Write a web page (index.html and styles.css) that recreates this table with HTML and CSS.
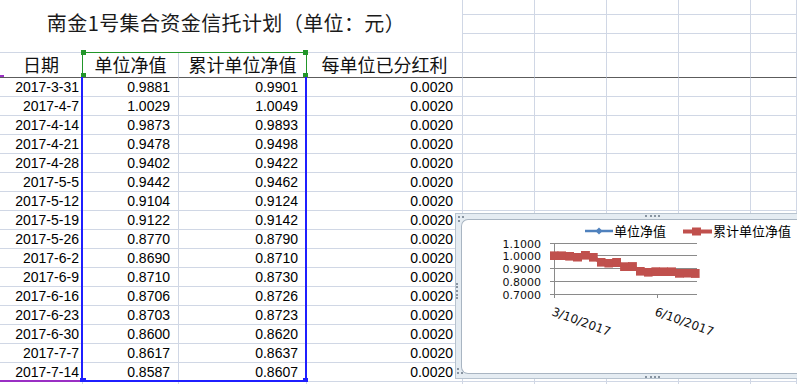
FILE: index.html
```html
<!DOCTYPE html>
<html lang="zh-CN">
<head>
<meta charset="utf-8">
<title>南金1号集合资金信托计划</title>
<link rel="stylesheet" href="styles.css">
</head>
<body>
<div class="sheet">
  <div class="grid">
    <div class="c title">南金1号集合资金信托计划（单位：元）</div>
    <div class="c"></div><div class="c"></div><div class="c"></div><div class="c"></div><div class="c"></div>
    <div class="c"></div><div class="c"></div><div class="c"></div><div class="c"></div><div class="c"></div>
    <div class="c"></div><div class="c"></div><div class="c"></div><div class="c"></div><div class="c"></div>

    <div class="c h">日期</div><div class="c h">单位净值</div><div class="c h">累计单位净值</div><div class="c h">每单位已分红利</div>
    <div class="c h"></div><div class="c h"></div><div class="c h"></div><div class="c h"></div><div class="c h"></div>

    <div class="c d">2017-3-31</div><div class="c n">0.9881</div><div class="c n">0.9901</div><div class="c n nd">0.0020</div>
    <div class="c"></div><div class="c"></div><div class="c"></div><div class="c"></div><div class="c"></div>
    <div class="c d">2017-4-7</div><div class="c n">1.0029</div><div class="c n">1.0049</div><div class="c n nd">0.0020</div>
    <div class="c"></div><div class="c"></div><div class="c"></div><div class="c"></div><div class="c"></div>
    <div class="c d">2017-4-14</div><div class="c n">0.9873</div><div class="c n">0.9893</div><div class="c n nd">0.0020</div>
    <div class="c"></div><div class="c"></div><div class="c"></div><div class="c"></div><div class="c"></div>
    <div class="c d">2017-4-21</div><div class="c n">0.9478</div><div class="c n">0.9498</div><div class="c n nd">0.0020</div>
    <div class="c"></div><div class="c"></div><div class="c"></div><div class="c"></div><div class="c"></div>
    <div class="c d">2017-4-28</div><div class="c n">0.9402</div><div class="c n">0.9422</div><div class="c n nd">0.0020</div>
    <div class="c"></div><div class="c"></div><div class="c"></div><div class="c"></div><div class="c"></div>
    <div class="c d">2017-5-5</div><div class="c n">0.9442</div><div class="c n">0.9462</div><div class="c n nd">0.0020</div>
    <div class="c"></div><div class="c"></div><div class="c"></div><div class="c"></div><div class="c"></div>
    <div class="c d">2017-5-12</div><div class="c n">0.9104</div><div class="c n">0.9124</div><div class="c n nd">0.0020</div>
    <div class="c"></div><div class="c"></div><div class="c"></div><div class="c"></div><div class="c"></div>
    <div class="c d">2017-5-19</div><div class="c n">0.9122</div><div class="c n">0.9142</div><div class="c n nd">0.0020</div>
    <div class="c"></div><div class="c"></div><div class="c"></div><div class="c"></div><div class="c"></div>
    <div class="c d">2017-5-26</div><div class="c n">0.8770</div><div class="c n">0.8790</div><div class="c n nd">0.0020</div>
    <div class="c"></div><div class="c"></div><div class="c"></div><div class="c"></div><div class="c"></div>
    <div class="c d">2017-6-2</div><div class="c n">0.8690</div><div class="c n">0.8710</div><div class="c n nd">0.0020</div>
    <div class="c"></div><div class="c"></div><div class="c"></div><div class="c"></div><div class="c"></div>
    <div class="c d">2017-6-9</div><div class="c n">0.8710</div><div class="c n">0.8730</div><div class="c n nd">0.0020</div>
    <div class="c"></div><div class="c"></div><div class="c"></div><div class="c"></div><div class="c"></div>
    <div class="c d">2017-6-16</div><div class="c n">0.8706</div><div class="c n">0.8726</div><div class="c n nd">0.0020</div>
    <div class="c"></div><div class="c"></div><div class="c"></div><div class="c"></div><div class="c"></div>
    <div class="c d">2017-6-23</div><div class="c n">0.8703</div><div class="c n">0.8723</div><div class="c n nd">0.0020</div>
    <div class="c"></div><div class="c"></div><div class="c"></div><div class="c"></div><div class="c"></div>
    <div class="c d">2017-6-30</div><div class="c n">0.8600</div><div class="c n">0.8620</div><div class="c n nd">0.0020</div>
    <div class="c"></div><div class="c"></div><div class="c"></div><div class="c"></div><div class="c"></div>
    <div class="c d">2017-7-7</div><div class="c n">0.8617</div><div class="c n">0.8637</div><div class="c n nd">0.0020</div>
    <div class="c"></div><div class="c"></div><div class="c"></div><div class="c"></div><div class="c"></div>
    <div class="c d">2017-7-14</div><div class="c n">0.8587</div><div class="c n">0.8607</div><div class="c n nd">0.0020</div>
    <div class="c"></div><div class="c"></div><div class="c"></div><div class="c"></div><div class="c"></div>

    <div class="c"></div><div class="c"></div><div class="c"></div><div class="c"></div><div class="c"></div>
    <div class="c"></div><div class="c"></div><div class="c"></div><div class="c"></div>
  </div>

  <!-- selection overlays -->
  <div class="sel-head"></div>
  <div class="sel-range"></div>
  <div class="sel-purple"></div>
  <div class="sel-purple-top"></div>
  <div class="knob knob-g knob-tl"></div>
  <div class="knob knob-g knob-tr"></div>
  <div class="knob knob-g knob-ml"></div>
  <div class="knob knob-g knob-mr"></div>
  <div class="knob knob-b knob-bl"></div>
  <div class="knob knob-b knob-br"></div>

  <!-- embedded chart -->
  <div class="chart">
    <div class="chart-inner">
      <svg class="plot" width="334" height="152" viewBox="462 220 334 152" xmlns="http://www.w3.org/2000/svg">
        <defs>
          <marker id="sq" viewBox="0 0 9 9" refX="4.5" refY="4.5" markerWidth="9" markerHeight="9" markerUnits="userSpaceOnUse">
            <rect width="9" height="9" fill="#c0504d"/>
          </marker>
          <marker id="dm" viewBox="0 0 7 7" refX="3.5" refY="3.5" markerWidth="7" markerHeight="7" markerUnits="userSpaceOnUse">
            <path d="M3.5 0 7 3.5 3.5 7 0 3.5z" fill="#4f81bd"/>
          </marker>
        </defs>

        <!-- legend -->
        <line x1="585" y1="231" x2="613" y2="231" stroke="#4f81bd" stroke-width="2.5"/>
        <path d="M599 227.5 602.5 231 599 234.5 595.5 231z" fill="#4f81bd"/>
        <text class="lg" x="614" y="236">单位净值</text>
        <line x1="683" y1="231.5" x2="712" y2="231.5" stroke="#c0504d" stroke-width="4"/>
        <rect x="692" y="227.5" width="9" height="8" fill="#c0504d"/>
        <text class="lg" x="713" y="236">累计单位净值</text>

        <!-- grid -->
        <g stroke="#8a8a8a" stroke-width="1">
          <line x1="550" y1="243.5" x2="697" y2="243.5"/>
          <line x1="550" y1="255.5" x2="697" y2="255.5"/>
          <line x1="550" y1="268.5" x2="697" y2="268.5"/>
          <line x1="550" y1="281.5" x2="697" y2="281.5"/>
          <line x1="550" y1="294.5" x2="697" y2="294.5"/>
          <line x1="554.5" y1="243" x2="554.5" y2="298"/>
          <line x1="657.5" y1="294" x2="657.5" y2="298"/>
        </g>

        <!-- y axis labels -->
        <g class="ax">
          <text x="541" y="247.5">1.1000</text>
          <text x="541" y="259.5">1.0000</text>
          <text x="541" y="272.5">0.9000</text>
          <text x="541" y="285.5">0.8000</text>
          <text x="541" y="298.5">0.7000</text>
        </g>
        <!-- x axis labels -->
        <text class="axx" x="551" y="315" transform="rotate(20 551 315)">3/10/2017</text>
        <text class="axx" x="654" y="315" transform="rotate(20 654 315)">6/10/2017</text>

        <!-- series -->
        <polyline fill="none" stroke="#4f81bd" stroke-width="2" marker-start="url(#dm)" marker-mid="url(#dm)" marker-end="url(#dm)"
          points="554,256.2 561.8,256.2 569.7,256.4 577.5,257.3 585.4,255.4 593.2,257.4 601,262.4 608.9,263.3 616.7,262.8 624.6,267.1 632.4,266.9 640.2,271.4 648.1,272.4 655.9,272.1 663.8,272.2 671.6,272.2 679.4,273.5 687.3,273.3 695.1,273.7"/>
        <polyline fill="none" stroke="#c0504d" stroke-width="4" marker-start="url(#sq)" marker-mid="url(#sq)" marker-end="url(#sq)"
          points="554,255.9 561.8,255.9 569.7,256.1 577.5,257 585.4,255.1 593.2,257.1 601,262.1 608.9,263 616.7,262.5 624.6,266.8 632.4,266.6 640.2,271.1 648.1,272.1 655.9,271.8 663.8,271.9 671.6,271.9 679.4,273.2 687.3,273 695.1,273.4"/>
      </svg>
    </div>
    <span class="grip grip-top"></span>
    <span class="grip grip-bottom"></span>
    <span class="grip grip-left"></span>
    <span class="grip grip-ctl"></span>
    <span class="grip grip-cbl"></span>
  </div>
</div>
</body>
</html>
```

FILE: styles.css
```css
html, body {
  margin: 0;
  padding: 0;
}

body {
  width: 797px;
  height: 384px;
  overflow: hidden;
  background: #ffffff;
  font-family: "Liberation Sans", Arial, sans-serif;
  color: #000;
}

.sheet {
  position: relative;
  width: 797px;
  height: 384px;
  overflow: hidden;
}

.grid {
  display: grid;
  grid-template-columns: 83px 96px 128px 156px 72px 72px 72px 72px 46px;
  grid-template-rows: 15px 19px 19px 25px repeat(17, 19px);
}

.c {
  box-sizing: border-box;
  border-right: 1px solid #d0d7e5;
  border-bottom: 1px solid #d0d7e5;
  font-size: 14px;
  line-height: 18px;
  white-space: nowrap;
  overflow: hidden;
}

.title {
  grid-column: 1 / 5;
  grid-row: 1 / 4;
  display: flex;
  align-items: center;
  justify-content: center;
  overflow: visible;
  padding: 0 10px 6px 0;
  font-family: "Noto Sans CJK SC", "Liberation Sans", sans-serif;
  font-size: 20px;
  line-height: 24px;
  letter-spacing: 0.4px;
  color: #1a1a1a;
}

.h {
  border-bottom-color: #5c5c5c;
  display: flex;
  align-items: center;
  justify-content: center;
  overflow: visible;
  padding-bottom: 2px;
  font-family: "Noto Sans CJK SC", "Liberation Sans", sans-serif;
  font-size: 18px;
  line-height: 20px;
  color: #111;
}

.d {
  text-align: right;
  padding-right: 3px;
}

.n {
  text-align: right;
  padding-right: 8px;
}

.nd {
  padding-right: 9px;
}

/* selection overlays */
.sel-head {
  position: absolute;
  left: 82px;
  top: 52px;
  width: 223px;
  height: 24px;
  border: 1px solid #22962a;
  border-bottom: none;
}

.sel-range {
  position: absolute;
  left: 81px;
  top: 76px;
  width: 222px;
  height: 304px;
  border: 2px solid #1f1fff;
  border-top: none;
}

.sel-purple {
  position: absolute;
  left: 0;
  top: 380px;
  width: 81px;
  height: 2px;
  background: #9a2fc4;
}

.sel-purple-top {
  position: absolute;
  left: 0;
  top: 75px;
  width: 4px;
  height: 2px;
  background: #9a2fc4;
}

.knob {
  position: absolute;
  width: 5px;
  height: 5px;
}

.knob-g { background: #22962a; }
.knob-b { background: #1f1fff; }

.knob-tl { left: 81px; top: 50px; }
.knob-tr { left: 303px; top: 50px; }
.knob-ml { left: 81px; top: 73px; height: 4px; }
.knob-mr { left: 303px; top: 73px; height: 4px; }
.knob-bl { left: 80px; top: 378px; width: 6px; height: 4px; }
.knob-br { left: 303px; top: 378px; height: 4px; }

/* chart */
.chart {
  position: absolute;
  left: 455px;
  top: 213px;
  width: 360px;
  height: 166px;
  box-sizing: border-box;
  border: 1px solid #b7c3cf;
  border-right: none;
  background: #e5ecf2;
  padding: 5px 0 4px 5px;
}

.chart-inner {
  height: 100%;
  box-sizing: border-box;
  background: #ffffff;
  border: 1px solid #a9b5c2;
  border-right: none;
  border-radius: 7px 0 0 7px;
  overflow: hidden;
}

.plot {
  display: block;
}

.lg {
  font-family: "Noto Sans CJK SC", "Liberation Sans", sans-serif;
  font-size: 13px;
  fill: #000;
}

.ax text {
  font-family: "DejaVu Sans", "Liberation Sans", sans-serif;
  font-size: 11px;
  text-anchor: end;
  fill: #111;
}

.axx {
  font-family: "DejaVu Sans", "Liberation Sans", sans-serif;
  font-size: 12px;
  fill: #111;
}

.grip {
  position: absolute;
  display: block;
  border: 0 dotted #8793a0;
}

.grip-top {
  left: 189px;
  top: 1px;
  width: 15px;
  border-top-width: 2px;
}

.grip-bottom {
  left: 189px;
  top: 162px;
  width: 15px;
  border-top-width: 2px;
}

.grip-left {
  left: 0;
  top: 69px;
  height: 16px;
  border-left-width: 2px;
}

.grip-ctl {
  left: 2px;
  top: 2px;
  width: 4px;
  height: 4px;
  border-top-width: 2px;
  border-left-width: 2px;
}

.grip-cbl {
  left: 1px;
  top: 154px;
  width: 4px;
  height: 4px;
  border-bottom-width: 2px;
  border-left-width: 2px;
}
```
